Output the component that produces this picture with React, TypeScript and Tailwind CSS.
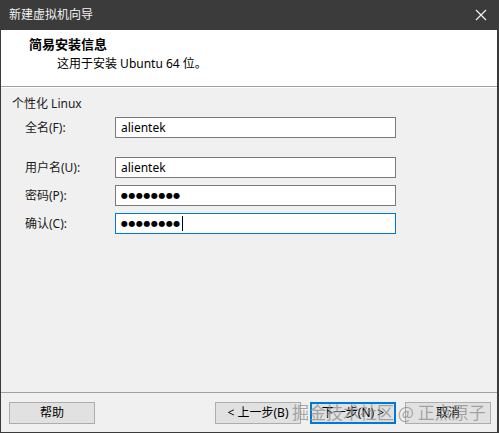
import React from "react";

const font = { fontFamily: '"Noto Sans", "Noto Sans CJK SC", sans-serif' };

const Field = ({
  label,
  value,
  secret,
  focused,
  className,
}: {
  label: string;
  value: string;
  secret?: boolean;
  focused?: boolean;
  className?: string;
}) => (
  <div className={"flex items-center h-[21px] " + (className ?? "")}>
    <span className="w-[114px] pl-[24px] text-[12px] text-[#1a1a1a] whitespace-nowrap">{label}</span>
    <div
      className={
        "w-[281px] h-[21px] bg-white border flex items-center pl-[5px] " +
        (focused ? "border-[#0078d7]" : "border-[#7a7a7a]")
      }
    >
      {secret ? (
        <span className="flex items-center">
          <span className="text-[8px] leading-none tracking-[0.5px] text-black" style={{ fontFamily: '"DejaVu Sans", sans-serif' }}>
            ●●●●●●●●
          </span>
          {focused && <span className="w-px h-[15px] bg-black ml-[1px]" />}
        </span>
      ) : (
        <span className="text-[12px] text-black">{value}</span>
      )}
    </div>
  </div>
);

const Btn = ({ children, primary }: { children: React.ReactNode; primary?: boolean }) => (
  <button
    className={
      "w-[86px] h-[22px] bg-[#e1e1e1] text-[12px] text-black flex items-center justify-center whitespace-nowrap " +
      (primary ? "border-2 border-[#0078d7]" : "border border-[#adadad]")
    }
  >
    {children}
  </button>
);

export default function App() {
  return (
    <div
      className="relative w-[499px] h-[433px] flex flex-col bg-[#f0f0f0] border-l border-r-2 border-b border-[#3b3b3b] overflow-hidden"
      style={font}
    >
      {/* title bar */}
      <div className="h-[30px] bg-[#3b3b3b] flex items-center justify-between pl-[8px] pr-[7px] shrink-0">
        <span className="text-[12px] text-[#f2f2f2]">新建虚拟机向导</span>
        <svg width="14" height="14" viewBox="0 0 14 14" className="mr-[2px]">
          <path d="M2 2 L12 12 M12 2 L2 12" stroke="#f2f2f2" strokeWidth="1.2" />
        </svg>
      </div>

      {/* header */}
      <div className="h-[57px] bg-white border-b border-[#a0a0a0] shrink-0 pl-[28px] pt-[6px]">
        <div className="text-[13px] font-bold text-black leading-[17px]">简易安装信息</div>
        <div className="text-[12px] text-black leading-[17px] pl-[28px] mt-[2px]">这用于安装 Ubuntu 64 位。</div>
      </div>

      {/* body */}
      <div className="flex-1 flex flex-col pt-[7px] border-t border-white">
        <div className="text-[12px] text-[#1a1a1a] leading-[17px] pl-[11px]">个性化 Linux</div>
        <Field label="全名(F):" value="alientek" className="mt-[5px]" />
        <Field label="用户名(U):" value="alientek" className="mt-[19px]" />
        <Field label="密码(P):" value="" secret className="mt-[7px]" />
        <Field label="确认(C):" value="" secret focused className="mt-[7px]" />
      </div>

      {/* footer */}
      <div className="h-[40px] border-t border-[#a0a0a0] shrink-0 flex items-start pt-[9px] pl-[8px]">
        <Btn>帮助</Btn>
        <div className="ml-auto flex gap-[9px] pr-[6px]">
          <Btn>&lt; 上一步(B)</Btn>
          <Btn primary>下一步(N) &gt;</Btn>
          <Btn>取消</Btn>
        </div>
      </div>

      {/* watermark */}
      <div
        className="absolute left-[291px] top-[401px] text-[17px] leading-[22px] text-[#8c8c8c]/75 whitespace-nowrap"
        style={{ fontFamily: '"Noto Sans CJK SC", sans-serif' }}
      >
        掘金技术社区 @ 正点原子
      </div>
    </div>
  );
}
